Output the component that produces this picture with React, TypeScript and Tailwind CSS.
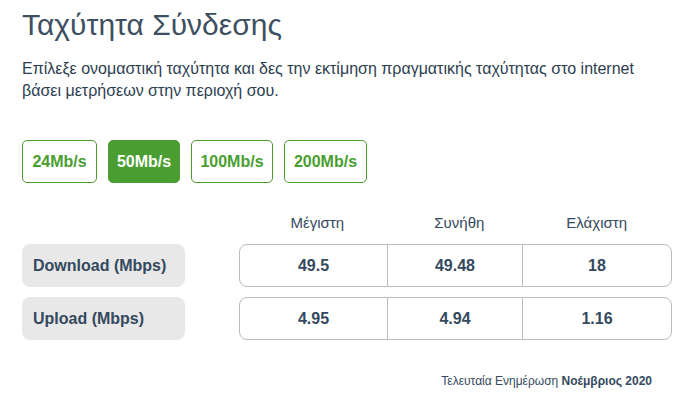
import React from 'react';

const speeds = [
  { label: '24Mb/s', w: 'w-[75px]' },
  { label: '50Mb/s', w: 'w-[72px]' },
  { label: '100Mb/s', w: 'w-[82px]' },
  { label: '200Mb/s', w: 'w-[83px]' },
];

const rows = [
  { label: 'Download (Mbps)', values: ['49.5', '49.48', '18'] },
  { label: 'Upload (Mbps)', values: ['4.95', '4.94', '1.16'] },
];

export default function App() {
  const active = '50Mb/s';
  return (
    <div className="w-[682px] h-[401px] bg-white text-[#34495e] font-['Liberation_Sans',Arial,sans-serif] pl-[22px] pr-[10px] pt-[5px]">
      <h1 className="text-[30px] leading-[40px] text-[#3d4f60]">Ταχύτητα Σύνδεσης</h1>
      <p className="mt-[13px] text-[16px] leading-[22px] text-[#2c3e50]">
        Επίλεξε ονομαστική ταχύτητα και δες την εκτίμηση πραγματικής ταχύτητας στο internet βάσει μετρήσεων στην περιοχή σου.
      </p>

      <div className="mt-[38px] flex gap-[11px]">
        {speeds.map((s) => (
          <button
            key={s.label}
            className={
              s.label === active
                ? `${s.w} h-[43px] rounded-[5px] border border-[#4a9e31] bg-[#4a9e31] text-white text-[16px] font-bold`
                : `${s.w} h-[43px] rounded-[5px] border border-[#4a9e31] bg-white text-[#4a9e31] text-[16px] font-bold`
            }
          >
            {s.label}
          </button>
        ))}
      </div>

      <div className="mt-[30px] flex">
        <div className="w-[217px]" />
        <div className="w-[438px] grid grid-cols-[160px_124px_1fr] text-[15px] leading-[20px] text-[#34495e] pb-[11px]">
          <div className="text-center">Μέγιστη</div>
          <div className="text-center">Συνήθη</div>
          <div className="text-center">Ελάχιστη</div>
        </div>
      </div>

      <div className="flex flex-col gap-[10px]">
        {rows.map((r) => (
          <div key={r.label} className="flex gap-[54px]">
            <div className="w-[163px] h-[43px] rounded-[8px] bg-[#e8e8e8] flex items-center pl-[11px] text-[16px] font-bold text-[#34495e]">
              {r.label}
            </div>
            <div className="w-[433px] h-[43px] rounded-[8px] border border-[#bcbcbc] grid grid-cols-[148px_135px_1fr] text-[16px] font-bold text-[#34495e]">
              {r.values.map((v, i) => (
                <div
                  key={i}
                  className={
                    i < 2
                      ? 'flex items-center justify-center border-r border-[#bcbcbc]'
                      : 'flex items-center justify-center'
                  }
                >
                  {v}
                </div>
              ))}
            </div>
          </div>
        ))}
      </div>

      <div className="mt-[32px] pr-[20px] text-right text-[12px] text-[#34495e]">
        Τελευταία Ενημέρωση <span className="font-bold">Νοέμβριος 2020</span>
      </div>
    </div>
  );
}
